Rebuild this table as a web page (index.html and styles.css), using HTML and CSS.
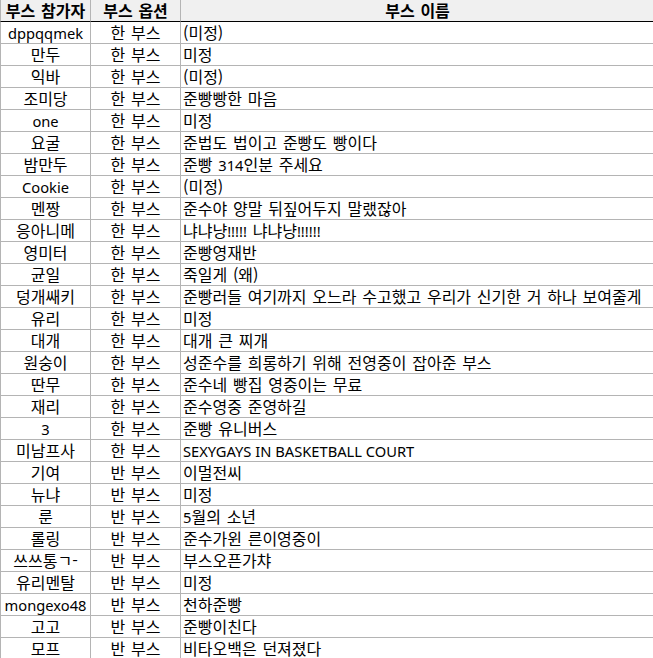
FILE: index.html
```html
<!DOCTYPE html>
<html lang="ko">
<head>
<meta charset="utf-8">
<title>부스 목록</title>
<link rel="stylesheet" href="styles.css">
</head>
<body>
<table class="booths">
  <thead>
    <tr>
      <th class="c-who">부스 참가자</th>
      <th class="c-opt">부스 옵션</th>
      <th class="c-name">부스 이름</th>
    </tr>
  </thead>
  <tbody>
    <tr><td class="c-who"><span class="en">dppqqmek</span></td><td class="c-opt">한 부스</td><td class="c-name">(미정)</td></tr>
    <tr><td class="c-who">만두</td><td class="c-opt">한 부스</td><td class="c-name">미정</td></tr>
    <tr><td class="c-who">익바</td><td class="c-opt">한 부스</td><td class="c-name">(미정)</td></tr>
    <tr><td class="c-who">조미당</td><td class="c-opt">한 부스</td><td class="c-name">준빵빵한 마음</td></tr>
    <tr><td class="c-who"><span class="en">one</span></td><td class="c-opt">한 부스</td><td class="c-name">미정</td></tr>
    <tr><td class="c-who">요굴</td><td class="c-opt">한 부스</td><td class="c-name">준법도 법이고 준빵도 빵이다</td></tr>
    <tr><td class="c-who">밤만두</td><td class="c-opt">한 부스</td><td class="c-name">준빵 <span class="en">314</span>인분 주세요</td></tr>
    <tr><td class="c-who"><span class="en">Cookie</span></td><td class="c-opt">한 부스</td><td class="c-name">(미정)</td></tr>
    <tr><td class="c-who">멘짱</td><td class="c-opt">한 부스</td><td class="c-name">준수야 양말 뒤짚어두지 말랬잖아</td></tr>
    <tr><td class="c-who">응아니메</td><td class="c-opt">한 부스</td><td class="c-name">냐냐냥<span class="en">!!!!!</span> 냐냐냥<span class="en">!!!!!!</span></td></tr>
    <tr><td class="c-who">영미터</td><td class="c-opt">한 부스</td><td class="c-name">준빵영재반</td></tr>
    <tr><td class="c-who">균일</td><td class="c-opt">한 부스</td><td class="c-name">죽일게 (왜)</td></tr>
    <tr><td class="c-who">덩개쌔키</td><td class="c-opt">한 부스</td><td class="c-name">준빵러들 여기까지 오느라 수고했고 우리가 신기한 거 하나 보여줄게</td></tr>
    <tr><td class="c-who">유리</td><td class="c-opt">한 부스</td><td class="c-name">미정</td></tr>
    <tr><td class="c-who">대개</td><td class="c-opt">한 부스</td><td class="c-name">대개 큰 찌개</td></tr>
    <tr><td class="c-who">원숭이</td><td class="c-opt">한 부스</td><td class="c-name">성준수를 희롱하기 위해 전영중이 잡아준 부스</td></tr>
    <tr><td class="c-who">딴무</td><td class="c-opt">한 부스</td><td class="c-name">준수네 빵집 영중이는 무료</td></tr>
    <tr><td class="c-who">재리</td><td class="c-opt">한 부스</td><td class="c-name">준수영중 준영하길</td></tr>
    <tr><td class="c-who"><span class="en">3</span></td><td class="c-opt">한 부스</td><td class="c-name">준빵 유니버스</td></tr>
    <tr><td class="c-who">미남프사</td><td class="c-opt">한 부스</td><td class="c-name"><span class="en">SEXYGAYS IN BASKETBALL COURT</span></td></tr>
    <tr><td class="c-who">기여</td><td class="c-opt">반 부스</td><td class="c-name">이멀전씨</td></tr>
    <tr><td class="c-who">뉴냐</td><td class="c-opt">반 부스</td><td class="c-name">미정</td></tr>
    <tr><td class="c-who">룬</td><td class="c-opt">반 부스</td><td class="c-name"><span class="en">5</span>월의 소년</td></tr>
    <tr><td class="c-who">롤링</td><td class="c-opt">반 부스</td><td class="c-name">준수가윈 른이영중이</td></tr>
    <tr><td class="c-who">쓰쓰통ㄱ-</td><td class="c-opt">반 부스</td><td class="c-name">부스오픈가챠</td></tr>
    <tr><td class="c-who">유리멘탈</td><td class="c-opt">반 부스</td><td class="c-name">미정</td></tr>
    <tr><td class="c-who"><span class="en">mongexo48</span></td><td class="c-opt">반 부스</td><td class="c-name">천하준빵</td></tr>
    <tr><td class="c-who">고고</td><td class="c-opt">반 부스</td><td class="c-name">준빵이친다</td></tr>
    <tr><td class="c-who">모프</td><td class="c-opt">반 부스</td><td class="c-name">비타오백은 던져졌다</td></tr>
  </tbody>
</table>
</body>
</html>
```

FILE: styles.css
```css
html, body {
  margin: 0;
  padding: 0;
  background: #ffffff;
}

.booths {
  border-collapse: separate;
  border-spacing: 0;
  table-layout: fixed;
  width: 654px;
  font-family: "Noto Sans CJK KR", "Noto Sans", sans-serif;
  font-size: 16px;
  word-spacing: 1.3px;
  color: #000000;
}

.booths th,
.booths td {
  box-sizing: border-box;
  height: 22px;
  max-height: 22px;
  padding: 0 2px;
  line-height: 21px;
  border-left: 1px solid #b4b4b4;
  border-bottom: 1px solid #b4b4b4;
  white-space: nowrap;
  vertical-align: middle;
}

.booths th {
  background: #f0f0f0;
  font-weight: bold;
  text-align: center;
  border-bottom-color: #000000;
}

.booths .c-who {
  width: 90px;
  text-align: center;
}

.booths .c-opt {
  width: 90px;
  text-align: center;
}

.booths td.c-name {
  text-align: left;
}

.booths .en {
  font-family: "Noto Sans", "Open Sans", sans-serif;
  font-size: 14.7px;
  line-height: 1;
  word-spacing: 0;
}
```
